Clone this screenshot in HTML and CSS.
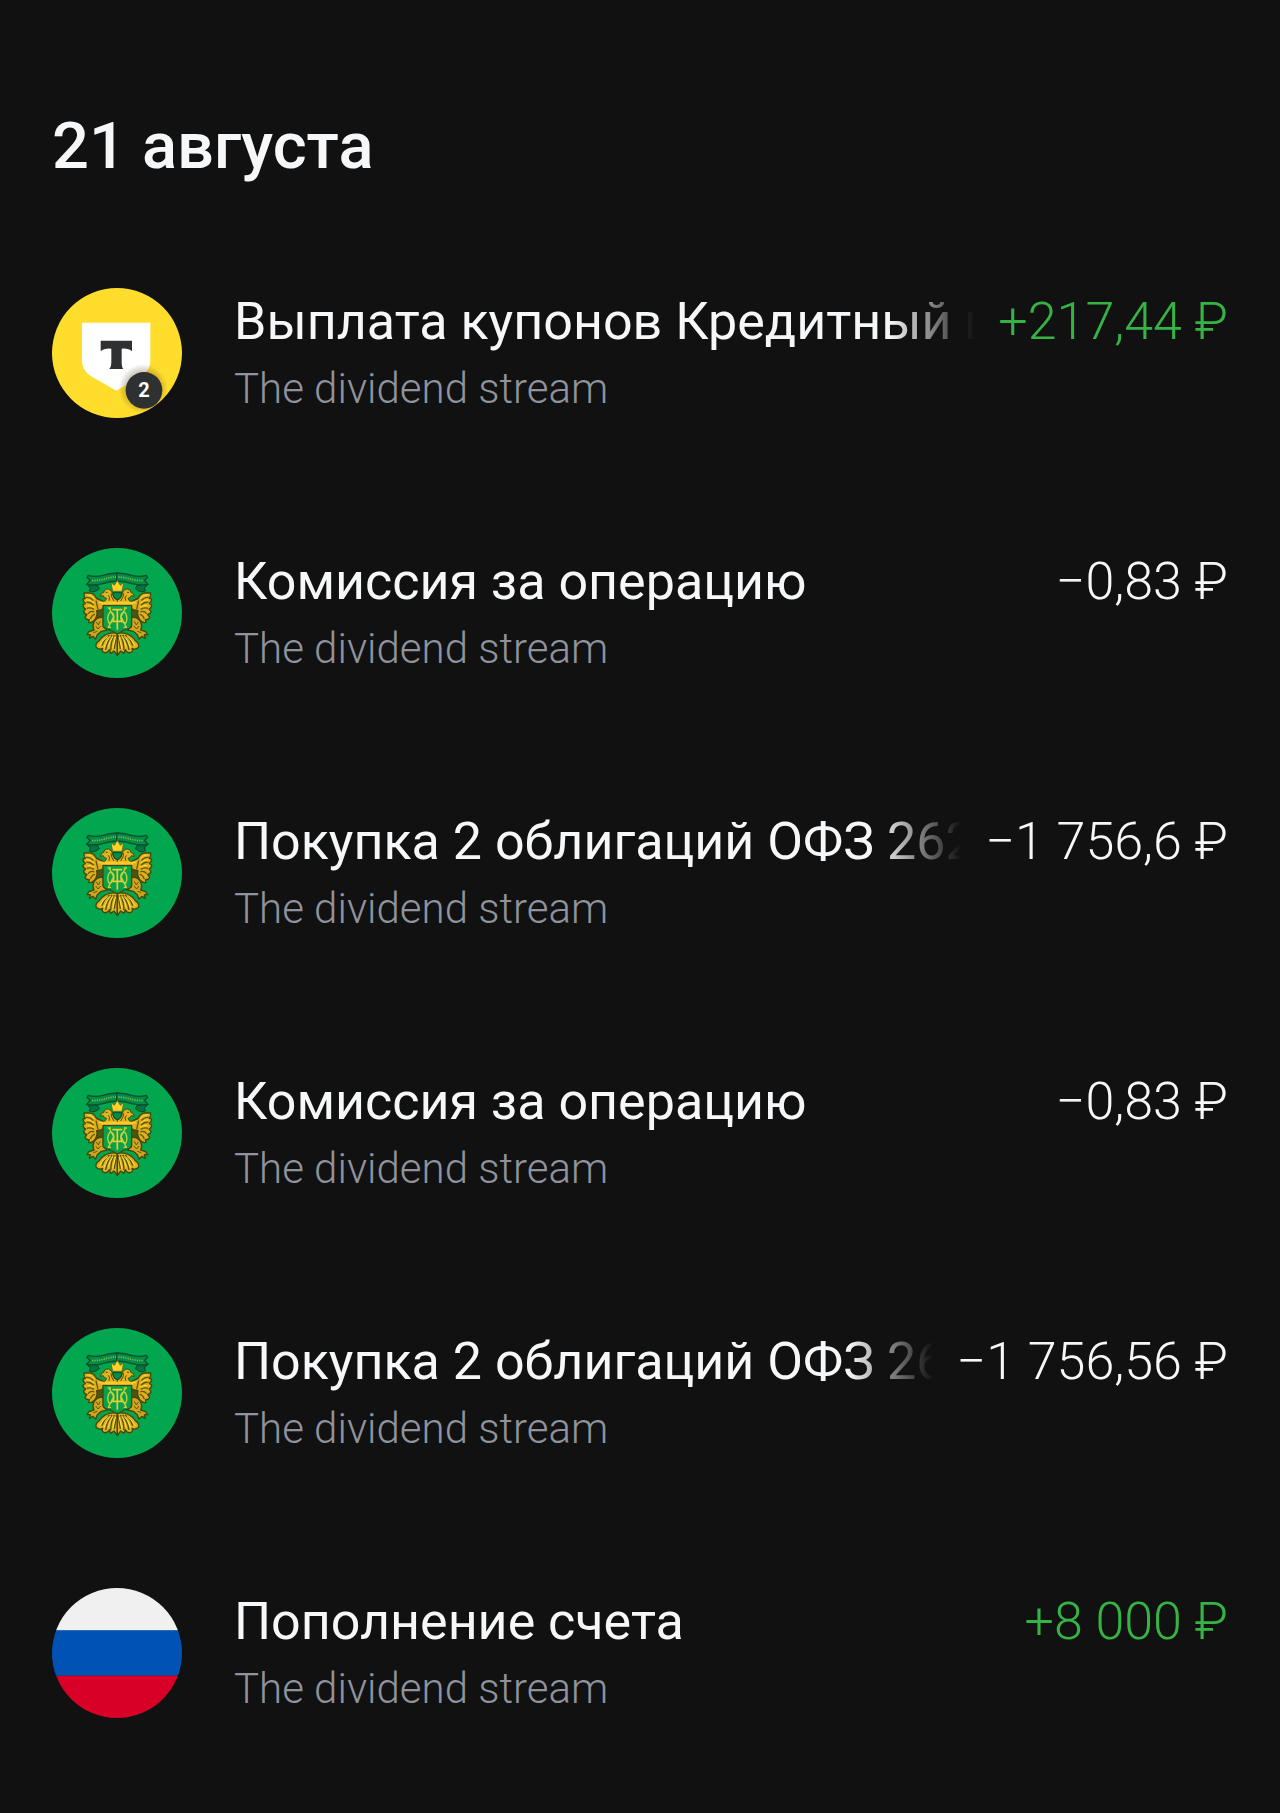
FILE: index.html
```html
<!DOCTYPE html>
<html lang="ru">
<head>
<meta charset="utf-8">
<meta name="viewport" content="width=device-width, initial-scale=1">
<title>История операций</title>
<link rel="stylesheet" href="styles.css">
</head>
<body>
<svg class="sprite" aria-hidden="true">
  <defs>
    <g id="emblem-half">
      <!-- shadow between wing, shield and leg -->
      <path fill="#4c560f" d="M150 192 L186 210 L200 224 V262 L190 270 L160 268 Z"/>
      <!-- wing -->
      <path fill="#dfae1c" stroke="#45480c" stroke-width="4" stroke-linejoin="round" d="M190 214 L170 206 Q162 189 149 189 L132 189 Q131 198 136 205 L129 207 Q129 216 136 220 L129 225 Q129 234 137 237 L131 244 Q132 252 141 253 L135 262 Q139 270 148 269 L146 277 Q155 280 164 270 Q174 256 170 242 L182 240 L192 234 Z"/>
      <path fill="none" stroke="#5c560e" stroke-width="4" d="M138 202 Q152 201 160 212 M139 217 Q152 215 161 226 M140 235 Q151 231 162 238 M144 251 Q153 241 163 246 M151 267 Q156 254 165 253 M168 212 L174 238"/>
      <path fill="none" stroke="#ffdc3c" stroke-width="3" d="M140 194 Q154 193 163 207 M140 210 Q152 208 162 219 M143 227 Q153 224 164 232 M176 218 h12"/>
      <!-- neck and head -->
      <path fill="#e6b51e" stroke="#45480c" stroke-width="3" d="M186 220 Q197 214 200 205 Q192 205 190 197 L181 199 Q184 186 191 188 Q193 176 206 177 Q217 181 219 196 Q220 207 232 210 V222 Z"/>
      <path fill="none" stroke="#45480c" stroke-width="3" d="M197 187 h6 M205 196 Q211 201 207 212 M213 190 Q214 203 222 213"/>
      <!-- leg and claw -->
      <path fill="#d3a51c" stroke="#45480c" stroke-width="4" stroke-linejoin="round" d="M190 262 Q170 260 162 276 Q156 288 162 300 L147 305 L141 314 L151 314 L148 325 L158 319 L167 327 L172 314 L184 304 L202 300 L190 290 Z"/>
      <path fill="none" stroke="#5a560f" stroke-width="3" d="M169 276 l6 9 l6 -11 M167 288 l7 9 l8 -9 M160 308 l12 -4"/>
      <!-- tail feathers -->
      <path fill="#dfb11c" stroke="#45480c" stroke-width="4" stroke-linejoin="round" d="M232 308 L207 310 Q187 317 178 332 Q166 339 168 351 Q177 361 188 355 Q183 364 194 368 Q204 368 208 359 L212 370 L222 363 L232 376 Z"/>
      <path fill="none" stroke="#4f500d" stroke-width="4" d="M209 315 Q193 325 186 347 M216 315 Q202 332 197 360 M223 315 Q213 332 212 361 M229 316 L223 357"/>
      <path fill="none" stroke="#ffe04a" stroke-width="3" d="M203 319 Q188 330 178 348 M212 319 Q200 330 192 353 M219 319 Q209 333 205 352 M227 320 L218 356"/>
      <!-- ribbon -->
      <path fill="#06743e" stroke="#064526" stroke-width="3" d="M144 160 L144 168 L152 173 L147 182 Q156 189 168 183 L178 176 L172 166 Z"/>
      <path fill="#078a45" stroke="#06502d" stroke-width="4" d="M234 129 Q208 130 186 137 Q163 142 145 136 L141 142 L150 151 L140 163 Q163 168 188 161 Q210 153 234 153 Z"/>
      <path fill="none" stroke="#6fbd4a" stroke-width="5" stroke-dasharray="4 3" d="M156 152 Q180 152 200 145 Q216 141 232 141"/>
    </g>
    <symbol id="emblem" viewBox="36 54 390 390">
      <circle cx="231" cy="249" r="195" fill="#02a64e"/>
      <use href="#emblem-half"/>
      <use href="#emblem-half" transform="translate(464 0) scale(-1 1)"/>
      <path fill="#ffd12b" stroke="#5a5510" stroke-width="2" d="M218 184 L213 158 L223 166 L232 151 L241 166 L251 158 L246 184 Z"/>
      <path fill="#078c45" stroke="#064f2d" stroke-width="3" d="M219 188 H245 Q246 202 232 209 Q218 202 219 188 Z"/>
      <path fill="#07a04b" stroke="#45480c" stroke-width="4" d="M189 226 H275 V287 Q272 297 254 300 L232 312 L210 300 Q192 297 189 287 Z"/>
      <path fill="#ffc92c" d="M184 215 H280 V224 H184 Z"/>
      <path fill="none" stroke="#c9cf38" stroke-width="4" d="M203 234 h10 M208 235 L221 260 L205 292 M261 234 h-10 M256 235 L243 260 L259 292 M209 247 Q198 264 208 281 M255 247 Q266 264 256 281 M208 247 Q222 245 222 261 Q222 277 208 279 M256 247 Q242 245 242 261 Q242 277 256 279 M203 292 h10 M251 292 h10"/>
      <path fill="none" stroke="#f0cc2c" stroke-width="5" d="M217 239 H247 M232 238 V299 M218 274 H246"/>
    </symbol>
  </defs>
</svg>

<main class="history">
  <h1 class="date">21 августа</h1>
  <ul class="operations">
    <li class="operation">
      <svg class="avatar" viewBox="36 54 390 390" role="img" aria-label="Т-Банк, 2">
        <defs>
          <clipPath id="disc"><circle cx="231" cy="249" r="195"/></clipPath>
          <radialGradient id="shade"><stop offset="70%" stop-color="#45351a" stop-opacity=".25"/><stop offset="100%" stop-color="#45351a" stop-opacity="0"/></radialGradient>
        </defs>
        <circle cx="231" cy="249" r="195" fill="#ffdd2d"/>
        <path fill="#fff" d="M126 158 H331 V272 Q331 301 305 318 L229 362 L152 318 Q126 301 126 272 Z"/>
        <path fill="#2f3032" d="M182 212 H276 V244 Q265 234 245 236 V276 Q245 292 250 297 H207 Q214 292 214 276 V236 Q193 234 182 244 Z"/>
        <g clip-path="url(#disc)"><circle cx="309" cy="356" r="74" fill="url(#shade)"/></g>
        <circle cx="312" cy="361" r="55" fill="#2f3032"/>
        <text class="badge-count" x="312" y="381" text-anchor="middle">2</text>
      </svg>
      <div class="details">
        <span class="title">Выплата купонов Кредитный п</span>
        <span class="amount income">+217,44 ₽</span>
        <span class="account">The dividend stream</span>
      </div>
    </li>
    <li class="operation">
      <svg class="avatar" aria-hidden="true"><use href="#emblem"/></svg>
      <div class="details">
        <span class="title">Комиссия за операцию</span>
        <span class="amount">−0,83 ₽</span>
        <span class="account">The dividend stream</span>
      </div>
    </li>
    <li class="operation">
      <svg class="avatar" aria-hidden="true"><use href="#emblem"/></svg>
      <div class="details">
        <span class="title">Покупка 2 облигаций ОФЗ 262</span>
        <span class="amount">−1 756,6 ₽</span>
        <span class="account">The dividend stream</span>
      </div>
    </li>
    <li class="operation">
      <svg class="avatar" aria-hidden="true"><use href="#emblem"/></svg>
      <div class="details">
        <span class="title">Комиссия за операцию</span>
        <span class="amount">−0,83 ₽</span>
        <span class="account">The dividend stream</span>
      </div>
    </li>
    <li class="operation">
      <svg class="avatar" aria-hidden="true"><use href="#emblem"/></svg>
      <div class="details">
        <span class="title">Покупка 2 облигаций ОФЗ 26</span>
        <span class="amount">−1 756,56 ₽</span>
        <span class="account">The dividend stream</span>
      </div>
    </li>
    <li class="operation">
      <svg class="avatar" viewBox="36 54 390 390" role="img" aria-label="Россия">
        <defs><clipPath id="flag"><circle cx="231" cy="249" r="195"/></clipPath></defs>
        <g clip-path="url(#flag)">
          <path fill="#f0f0f0" d="M36 54h390v128H36z"/>
          <path fill="#0052b4" d="M36 181h390v136H36z"/>
          <path fill="#d80027" d="M36 317h390v127H36z"/>
        </g>
      </svg>
      <div class="details">
        <span class="title">Пополнение счета</span>
        <span class="amount income">+8 000 ₽</span>
        <span class="account">The dividend stream</span>
      </div>
    </li>
  </ul>
</main>
</body>
</html>
```
FILE: styles.css
```css
* {
  box-sizing: border-box;
}

body {
  margin: 0;
  background: #111;
  color: #f6f7f8;
  font-family: Roboto, "Noto Sans", sans-serif;
}

.sprite {
  position: absolute;
  width: 0;
  height: 0;
}

.history {
  padding: 106px 52px 28px;
}

.date {
  margin: 0 0 38px;
  font-size: 65px;
  font-weight: 500;
  line-height: 80px;
}

.operations {
  margin: 0;
  padding: 0;
  list-style: none;
}

.operation {
  display: flex;
  align-items: flex-start;
  gap: 52px;
  padding: 64px 0;
}

.avatar {
  flex: none;
  width: 130px;
  height: 130px;
}

.badge-count {
  fill: #fff;
  font-size: 60px;
  font-weight: 700;
}

.details {
  flex: 1;
  min-width: 0;
  display: grid;
  grid-template-columns: minmax(0, 1fr) auto;
  column-gap: 24px;
  margin-bottom: -2px;
}

.title,
.amount {
  font-size: 52px;
  line-height: 68px;
  white-space: nowrap;
}

.title {
  overflow: hidden;
  mask-image: linear-gradient(to left, transparent, #000 84px);
}

.amount {
  font-weight: 330;
}

.income {
  color: #35b445;
}

.account {
  grid-column: 1 / -1;
  color: #8f939d;
  font-size: 42px;
  font-weight: 340;
  line-height: 66px;
}
```
